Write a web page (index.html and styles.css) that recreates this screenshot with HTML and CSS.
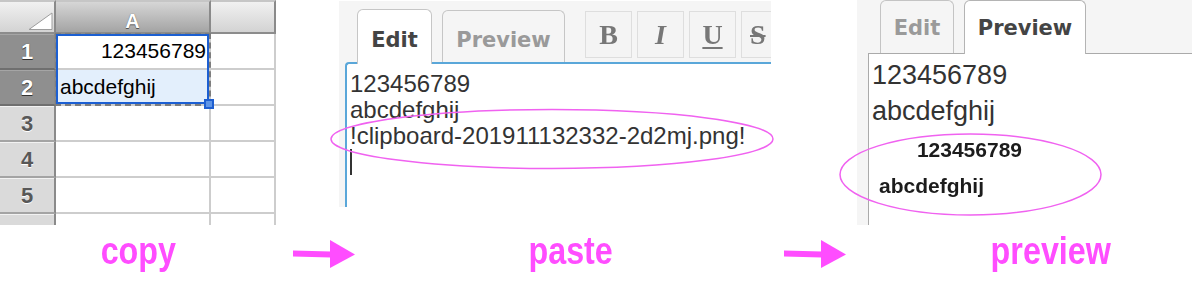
FILE: index.html
```html
<!DOCTYPE html>
<html lang="en">

<head>
    <meta charset="UTF-8">
    <meta name="viewport" content="width=device-width, initial-scale=1.0">
    <title>Paste from spreadsheet</title>
    <link rel="stylesheet" href="styles.css">
</head>

<body>

    <div class="shots">

        <!-- Spreadsheet: copy -->
        <div class="sheet">
            <div class="corner">
                <svg width="54" height="30" viewBox="0 0 54 30">
                    <polygon points="29,27.5 52,27.5 52,11" fill="#fff" stroke="#9d9d9d" stroke-width="1" />
                </svg>
            </div>
            <div class="col-head col-on">A</div>
            <div class="col-head"></div>

            <div class="row-head row-on">1</div>
            <div class="cell cell-num">123456789</div>
            <div class="cell"></div>

            <div class="row-head row-on">2</div>
            <div class="cell cell-sel">abcdefghij</div>
            <div class="cell"></div>

            <div class="row-head">3</div>
            <div class="cell"></div>
            <div class="cell"></div>

            <div class="row-head">4</div>
            <div class="cell"></div>
            <div class="cell"></div>

            <div class="row-head">5</div>
            <div class="cell"></div>
            <div class="cell"></div>

            <div class="row-head"></div>
            <div class="cell"></div>
            <div class="cell"></div>

            <!-- copy marquee + selection -->
            <div class="marquee"></div>
            <div class="selection"><span class="handle"></span></div>
        </div>

        <!-- Editor: paste -->
        <div class="editor">
            <div class="editor-bar">
                <div class="tab tab-on">Edit</div>
                <div class="tab">Preview</div>
                <div class="tools">
                    <span class="tool tool-b">B</span>
                    <span class="tool tool-i">I</span>
                    <span class="tool tool-u">U</span>
                    <span class="tool tool-s">S</span>
                </div>
            </div>
            <div class="editor-body">
                <div>123456789</div>
                <div>abcdefghij</div>
                <div>!clipboard-201911132332-2d2mj.png!</div>
                <div><span class="caret"></span></div>
            </div>
        </div>

        <!-- Preview -->
        <div class="preview">
            <div class="preview-bar">
                <div class="ptab">Edit</div>
                <div class="ptab ptab-on">Preview</div>
            </div>
            <div class="preview-body">
                <p>123456789</p>
                <p>abcdefghij</p>
                <div class="pasted">
                    <div class="pasted-num">123456789</div>
                    <div class="pasted-txt">abcdefghij</div>
                </div>
            </div>
        </div>

        <!-- hand drawn rings -->
        <svg class="ring ring-paste" width="444" height="62" viewBox="0 0 444 62">
            <ellipse cx="222" cy="31" rx="221" ry="29.5" />
        </svg>
        <svg class="ring ring-preview" width="263" height="83" viewBox="0 0 263 83">
            <ellipse cx="131.5" cy="41.5" rx="130.5" ry="40.5" />
        </svg>
    </div>

    <div class="labels">
        <div class="label label-copy"><span>copy</span></div>
        <svg class="arrow arrow-first" width="62" height="28" viewBox="0 0 62 28">
            <polygon points="0,10.5 38,11.5 38,17.5 0,16.5" />
            <polygon points="37,0 62,14.5 37,28" />
        </svg>
        <div class="label label-paste"><span>paste</span></div>
        <svg class="arrow" width="62" height="28" viewBox="0 0 62 28">
            <polygon points="0,10.5 38,11.5 38,17.5 0,16.5" />
            <polygon points="37,0 62,14.5 37,28" />
        </svg>
        <div class="label label-preview"><span>preview</span></div>
    </div>

</body>

</html>
```

FILE: styles.css
```css
body {
    margin: 0;
    padding: 0;
    background: #fff;
    font-family: "Liberation Sans", Arial, sans-serif;
    overflow: hidden;
}

.shots {
    position: relative;
    display: flex;
    align-items: flex-start;
    height: 225px;
}

/* Spreadsheet */
.sheet {
    position: relative;
    width: 276px;
    height: 225px;
    flex-shrink: 0;
    overflow: hidden;
    display: grid;
    grid-template-columns: 56px 155px 65px;
    grid-template-rows: 34px repeat(6, 36px);
    background: #fff;
}

.corner,
.col-head {
    box-sizing: border-box;
    border-top: 2px solid #c6c6c6;
    border-bottom: 2px solid #8c8c8c;
    background: linear-gradient(#f1f1f1, #d3d3d3);
}

.corner {
    border-right: 2px solid #8a8a8a;
}

.col-head {
    border-right: 2px solid #8a8a8a;
    padding-top: 8px;
    line-height: 22px;
    text-align: center;
    font-weight: bold;
    font-size: 20px;
    color: #fff;
    text-shadow: 0 1px 0 #555, 0 0 1px #555;
}

.col-on {
    background: linear-gradient(#d6d6d6, #a4a4a4);
}

.row-head {
    box-sizing: border-box;
    border-right: 2px solid #8a8a8a;
    border-bottom: 2px solid #a4a4a4;
    background: #dadada;
    box-shadow: inset 0 1px 0 #f2f2f2;
    display: flex;
    align-items: center;
    justify-content: center;
    padding-top: 2px;
    font-weight: bold;
    font-size: 22px;
    color: #585858;
    text-shadow: 0 1px 0 #fff;
}

.row-on {
    background: #8f8f8f;
    border-bottom-color: #6f6f6f;
    box-shadow: inset 0 1px 0 #a5a5a5;
    color: #fff;
    text-shadow: 0 1px 0 #333, 0 0 1px #444;
}

.cell {
    box-sizing: border-box;
    border-right: 2px solid #cdcdcd;
    border-bottom: 2px solid #cdcdcd;
    font-size: 21px;
    line-height: 34px;
    color: #000;
    padding: 0 3px 0 4px;
    white-space: nowrap;
}

.cell-num {
    text-align: right;
}

.cell-sel {
    background: #e3effc;
}

.marquee {
    position: absolute;
    left: 55px;
    top: 33px;
    width: 156px;
    height: 73px;
    box-sizing: border-box;
    border: 2px dashed #7d7d7d;
}

.selection {
    position: absolute;
    left: 56px;
    top: 34px;
    width: 153px;
    height: 70px;
    box-sizing: border-box;
    border: 2px solid #1c5fd2;
}

.handle {
    position: absolute;
    right: -7px;
    bottom: -7px;
    width: 10px;
    height: 10px;
    box-sizing: border-box;
    background: #5f95e6;
    border: 2px solid #1f5fd0;
}

/* Editor */
.editor {
    margin-left: 63px;
    margin-top: 1px;
    width: 432px;
    height: 206px;
    flex-shrink: 0;
    box-sizing: border-box;
    padding-left: 6px;
    background: #f5f5f5;
    display: flex;
    flex-direction: column;
}

.editor-bar {
    height: 61px;
    display: flex;
    align-items: flex-end;
}

.tab {
    box-sizing: border-box;
    margin-left: 10px;
    width: 123px;
    height: 52px;
    padding-top: 17px;
    border: 1px solid #c6c6c6;
    border-bottom: none;
    border-radius: 6px 6px 0 0;
    background: #f5f5f5;
    text-align: center;
    font-family: "DejaVu Sans", Verdana, sans-serif;
    font-weight: bold;
    font-size: 21px;
    line-height: 24px;
    color: #9a9a9a;
}

.tab-on {
    position: relative;
    z-index: 1;
    margin-left: 12px;
    margin-bottom: -2px;
    width: 75px;
    height: 55px;
    padding-top: 18px;
    background: #fff;
    color: #444;
}

.tools {
    flex: 1;
    min-width: 0;
    overflow: hidden;
    align-self: flex-start;
    margin-top: 10px;
    margin-left: 20px;
    display: flex;
    gap: 5px;
}

.tool {
    flex-shrink: 0;
    box-sizing: border-box;
    width: 47px;
    height: 47px;
    border: 1px solid #dedede;
    background: #f4f4f4;
    display: flex;
    align-items: center;
    justify-content: center;
    font-family: "Liberation Serif", "Times New Roman", serif;
    font-weight: bold;
    font-size: 28px;
    color: #777;
    filter: blur(0.5px);
}

.tool-i {
    font-style: italic;
}

.tool-u {
    text-decoration: underline;
    text-decoration-thickness: 2px;
    text-underline-offset: 3px;
}

.tool-s {
    text-decoration: line-through;
    text-decoration-thickness: 2px;
    justify-content: flex-start;
    padding-left: 8px;
}

.editor-body {
    flex: 1;
    background: #fff;
    border-left: 2px solid #5aa7d9;
    border-top: 2px solid #5aa7d9;
    border-top-left-radius: 4px;
    padding: 7px 0 0 3px;
    font-size: 24px;
    line-height: 26px;
    color: #333;
    white-space: nowrap;
}

.caret {
    display: inline-block;
    width: 2px;
    height: 26px;
    vertical-align: top;
    background: #333;
}

/* Preview */
.preview {
    margin-left: 86px;
    flex: 1;
    height: 225px;
    background: #f5f5f5;
    display: flex;
    flex-direction: column;
}

.preview-bar {
    height: 53px;
    padding-left: 23px;
    display: flex;
    align-items: flex-end;
    gap: 10px;
}

.ptab {
    box-sizing: border-box;
    width: 74px;
    height: 53px;
    padding-top: 15px;
    border: 1px solid #c4c4c4;
    border-bottom: none;
    border-radius: 6px 6px 0 0;
    background: #f5f5f5;
    text-align: center;
    font-family: "DejaVu Sans", Verdana, sans-serif;
    font-weight: bold;
    font-size: 21px;
    line-height: 24px;
    color: #9a9a9a;
}

.ptab-on {
    position: relative;
    z-index: 1;
    width: 122px;
    height: 54px;
    margin-bottom: -1px;
    border-color: #b4b4b4;
    background: #fff;
    color: #444;
}

.preview-body {
    flex: 1;
    margin-left: 11px;
    background: #fff;
    border-left: 1px solid #aaa;
    border-top: 1px solid #aaa;
    padding: 3px 0 0 3px;
    font-size: 27px;
    line-height: 36px;
    color: #333;
}

.preview-body p {
    margin: 0;
}

.pasted {
    margin: 3px 0 0 4px;
    width: 150px;
    font-weight: bold;
    font-size: 21px;
    line-height: 36px;
    color: #1c1c1c;
    filter: blur(0.6px);
}

.pasted-num {
    text-align: right;
    padding-right: 4px;
}

.pasted-txt {
    padding-left: 3px;
}

/* Annotation rings */
.ring {
    position: absolute;
    fill: none;
    stroke: #f062f0;
    stroke-width: 1.5;
}

.ring-paste {
    left: 330px;
    top: 108px;
}

.ring-preview {
    left: 839px;
    top: 133px;
}

/* Step labels */
.labels {
    height: 74px;
    display: flex;
    align-items: flex-start;
}

.label {
    box-sizing: border-box;
    padding-top: 4px;
    text-align: center;
    font-weight: bold;
    font-size: 38px;
    line-height: 44px;
    color: #ff4dff;
}

.label span {
    display: inline-block;
    transform: scaleX(0.85);
}

.label-copy {
    width: 276px;
}

.label-paste {
    width: 429px;
    padding-left: 3px;
}

.label-preview {
    flex: 1;
    padding-left: 64px;
}

.arrow {
    flex-shrink: 0;
    margin-top: 15px;
    fill: #ff4dff;
}

.arrow-first {
    margin-left: 17px;
}
```
